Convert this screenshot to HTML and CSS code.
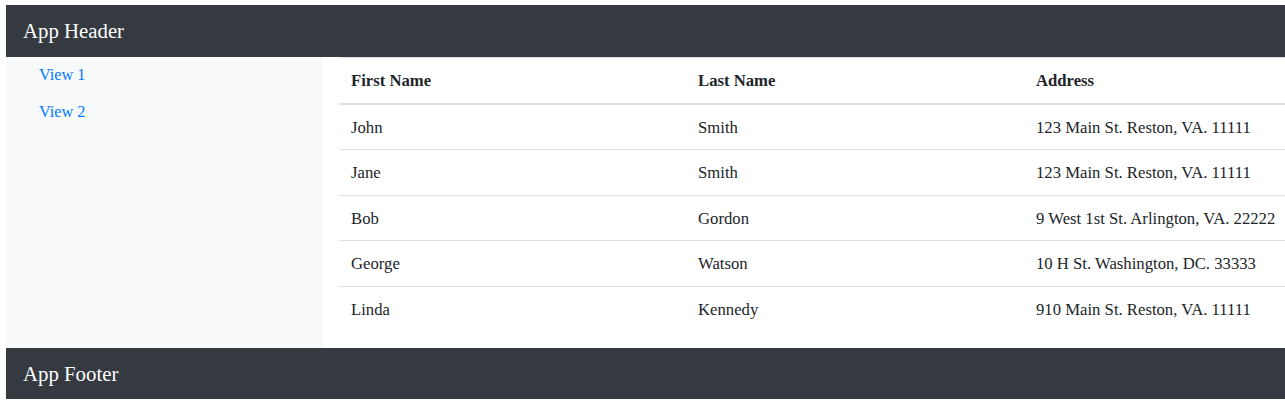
FILE: index.html
```html
<!DOCTYPE html>
<html>
<head>
<meta charset="utf-8">
<title>App</title>
<link rel="stylesheet" href="styles.css">
</head>
<body>
<div class="app">
  <header class="app-header">App Header</header>
  <div class="app-body">
    <nav class="sidebar">
      <a class="nav-link" href="#">View 1</a>
      <a class="nav-link" href="#">View 2</a>
    </nav>
    <main class="content">
      <table class="table">
        <colgroup>
          <col class="col-first">
          <col class="col-last">
          <col class="col-addr">
        </colgroup>
        <thead>
          <tr><th>First Name</th><th>Last Name</th><th>Address</th></tr>
        </thead>
        <tbody>
          <tr><td>John</td><td>Smith</td><td>123 Main St. Reston, VA. 11111</td></tr>
          <tr><td>Jane</td><td>Smith</td><td>123 Main St. Reston, VA. 11111</td></tr>
          <tr><td>Bob</td><td>Gordon</td><td>9 West 1st St. Arlington, VA. 22222</td></tr>
          <tr><td>George</td><td>Watson</td><td>10 H St. Washington, DC. 33333</td></tr>
          <tr><td>Linda</td><td>Kennedy</td><td>910 Main St. Reston, VA. 11111</td></tr>
        </tbody>
      </table>
    </main>
  </div>
  <footer class="app-footer">App Footer</footer>
</div>
</body>
</html>
```

FILE: styles.css
```css
html, body {
  margin: 0;
  padding: 0;
  background: #ffffff;
  overflow: hidden;
}
body {
  padding: 5px 0 0 6px;
  font-family: "Liberation Serif", "Times New Roman", serif;
  font-size: 16px;
  color: #212529;
}
.app {
  width: 1279px;
  display: flex;
  flex-direction: column;
}
.app-header,
.app-footer {
  background: #343a40;
  color: #ffffff;
  font-size: 20.8px;
  height: 52px;
  line-height: 52px;
  padding: 0 17px;
}
.app-footer {
  height: 51px;
  line-height: 51px;
}
.app-body {
  display: flex;
  gap: 16px;
}
.sidebar {
  width: 317px;
  flex: none;
  background: #f8f9fa;
  padding: 0 16px;
  box-sizing: border-box;
  display: flex;
  flex-direction: column;
  align-items: flex-start;
}
.nav-link {
  display: block;
  padding: 7px 17px 8px;
  line-height: 21.6px;
  font-size: 16.3px;
  color: #007bff;
  text-decoration: none;
}
.content {
  flex: 1;
  min-width: 0;
}
.table {
  width: 100%;
  border-collapse: collapse;
  table-layout: fixed;
  margin-bottom: 16px;
  font-size: 16.7px;
}
.col-first { width: 347px; }
.col-last { width: 338px; }
.table th,
.table td {
  text-align: left;
  padding: 13px 12px 11px;
  line-height: 20.6px;
  border-top: 1px solid #dee2e6;
  white-space: nowrap;
  vertical-align: top;
}
.table th {
  font-weight: bold;
  border-bottom: 2px solid #dee2e6;
}
```
